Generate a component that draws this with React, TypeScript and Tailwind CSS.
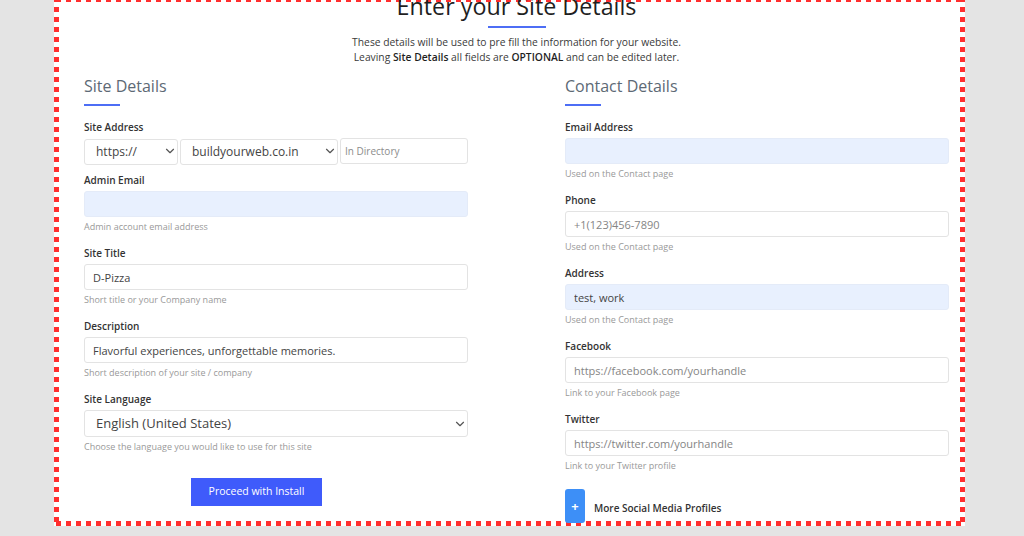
import { ChevronDown } from "lucide-react";
import clsx from "clsx";

type FieldProps = {
  label: string;
  hint?: string;
  className?: string;
  children: React.ReactNode;
};

function Field({ label, hint, className, children }: FieldProps) {
  return (
    <div className={className}>
      <label className="block text-[10px] font-semibold leading-[14px] text-[#333]">
        {label}
      </label>
      <div className="mt-[4px]">{children}</div>
      {hint && (
        <p className="mt-[4px] text-[9px] leading-[12px] text-[#999]">{hint}</p>
      )}
    </div>
  );
}

function TextInput({
  value,
  placeholder,
  filled,
  className,
}: {
  value?: string;
  placeholder?: string;
  filled?: boolean;
  className?: string;
}) {
  return (
    <input
      readOnly
      value={value ?? ""}
      placeholder={placeholder}
      className={clsx(
        "block h-[26px] w-full rounded-[3px] border px-[8px] text-[11px] text-[#444] outline-none placeholder:text-[#858585]",
        filled ? "border-[#e4ebf8] bg-[#e8f0fe] text-[#333]" : "border-[#e3e3e3] bg-white",
        className
      )}
    />
  );
}

function Select({
  value,
  className,
  textClass = "text-[12px]",
}: {
  value: string;
  className?: string;
  textClass?: string;
}) {
  return (
    <div className={clsx("relative", className)}>
      <select
        value={value}
        onChange={() => {}}
        className={clsx(
          "h-full w-full appearance-none rounded-[3px] border border-[#e3e3e3] bg-white pl-[11px] text-[#444] outline-none",
          textClass
        )}
      >
        <option>{value}</option>
      </select>
      <ChevronDown
        size={14}
        strokeWidth={2}
        className="pointer-events-none absolute right-[1px] top-1/2 -translate-y-1/2 text-[#555]"
      />
    </div>
  );
}

function SectionHeading({ title }: { title: string }) {
  return (
    <div>
      <h2 className="text-[16px] leading-[20px] text-[#5d6975]">{title}</h2>
      <div className="mt-[8px] h-[2px] w-[36px] bg-[#4d6ef5]" />
    </div>
  );
}

export default function App() {
  return (
    <div className="h-[536px] overflow-hidden bg-[#e4e4e4] font-['Open_Sans',sans-serif]">
      {/* white sheet with a red marching-ants frame */}
      <div className="-mt-[3px] ml-[54px] h-[529px] w-[911px] bg-white p-[5px] [background-image:linear-gradient(90deg,#ff2e2e_50%,transparent_0),linear-gradient(90deg,#ff2e2e_50%,transparent_0),linear-gradient(180deg,#ff2e2e_50%,transparent_0),linear-gradient(180deg,#ff2e2e_50%,transparent_0)] [background-position:2px_0,2px_100%,0_0,100%_0] [background-repeat:repeat-x,repeat-x,repeat-y,repeat-y] [background-size:10px_5px,10px_5px,5px_10px,5px_10px]">
        <div className="ml-[25px] w-[865px]">
          <h1 className="-mt-[7px] text-center text-[23.3px] leading-[23px] text-[#1f1f1f]">
            Enter your Site Details
          </h1>
          <div className="mx-auto mt-[8px] h-[2px] w-[58px] bg-[#4d6ef5]" />
          <p className="mt-[7px] text-center text-[10.3px] leading-[15px] text-[#3a3a3a]">
            These details will be used to pre fill the information for your website.
            <br />
            Leaving <b className="font-semibold text-[#1f1f1f]">Site Details</b> all fields are{" "}
            <b className="font-semibold text-[#1f1f1f]">OPTIONAL</b> and can be edited later.
          </p>

          <div className="mt-[11px] grid grid-cols-[384px_384px] gap-x-[97px]">
            {/* site details */}
            <div>
              <SectionHeading title="Site Details" />

              <Field label="Site Address" className="mt-[14px]">
                <div className="flex h-[26px] gap-[2px]">
                  <Select value="https://" className="w-[94px]" />
                  <Select value="buildyourweb.co.in" className="w-[158px]" />
                  <input
                    readOnly
                    placeholder="In Directory"
                    className="h-full w-[128px] rounded-[3px] border border-[#e3e3e3] bg-white px-[4px] text-[10px] outline-none placeholder:text-[#8c8c8c]"
                  />
                </div>
              </Field>

              <Field
                label="Admin Email"
                hint="Admin account email address"
                className="mt-[9px]"
              >
                <TextInput filled />
              </Field>

              <Field
                label="Site Title"
                hint="Short title or your Company name"
                className="mt-[13px]"
              >
                <TextInput value="D-Pizza" />
              </Field>

              <Field
                label="Description"
                hint="Short description of your site / company"
                className="mt-[13px]"
              >
                <TextInput value="Flavorful experiences, unforgettable memories." />
              </Field>

              <Field
                label="Site Language"
                hint="Choose the language you would like to use for this site"
                className="mt-[13px]"
              >
                <Select
                  value="English (United States)"
                  className="h-[27px] w-full"
                  textClass="text-[13px]"
                />
              </Field>

              <button className="ml-[107px] mt-[25px] h-[28px] w-[131px] bg-[#3f5bfb] text-[10.5px] text-white">
                Proceed with Install
              </button>
            </div>

            {/* contact details */}
            <div>
              <SectionHeading title="Contact Details" />

              <Field
                label="Email Address"
                hint="Used on the Contact page"
                className="mt-[14px]"
              >
                <TextInput filled />
              </Field>

              <Field label="Phone" hint="Used on the Contact page" className="mt-[13px]">
                <TextInput placeholder="+1(123)456-7890" />
              </Field>

              <Field label="Address" hint="Used on the Contact page" className="mt-[13px]">
                <TextInput value="test, work" filled />
              </Field>

              <Field label="Facebook" hint="Link to your Facebook page" className="mt-[13px]">
                <TextInput placeholder="https://facebook.com/yourhandle" />
              </Field>

              <Field label="Twitter" hint="Link to your Twitter profile" className="mt-[13px]">
                <TextInput placeholder="https://twitter.com/yourhandle" />
              </Field>

              <div className="mt-[17px] flex items-center gap-[9px]">
                <button className="h-[34px] w-[20px] rounded-[3px] bg-[#3d8ff7] text-[13px] font-bold leading-none text-white">
                  +
                </button>
                <span className="mt-[5px] text-[10px] font-semibold text-[#333]">
                  More Social Media Profiles
                </span>
              </div>
            </div>
          </div>
        </div>
      </div>
    </div>
  );
}
